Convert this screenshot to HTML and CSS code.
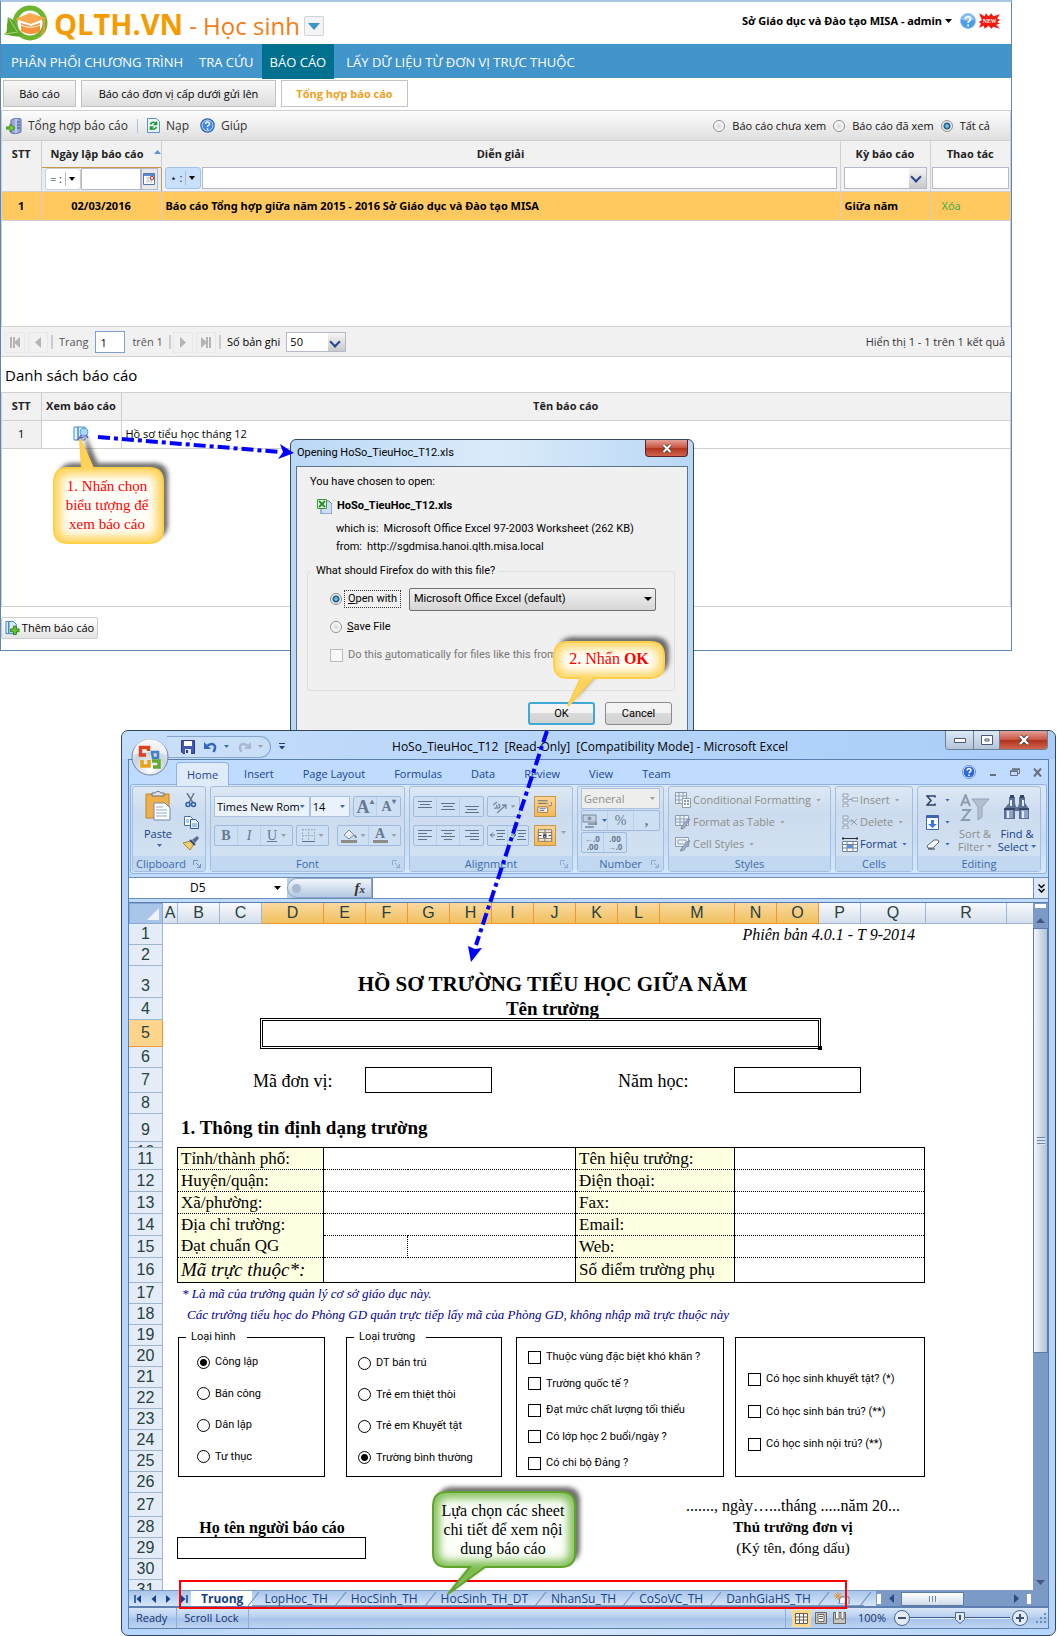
FILE: index.html
```html
<!DOCTYPE html>
<html lang="vi">
<head>
<meta charset="utf-8">
<meta name="viewport" content="width=device-width, initial-scale=1">
<title>QLTH.VN - Học sinh</title>
<link rel="stylesheet" href="styles.css">
</head>
<body>
<main class="desktop">

<section class="app">
  <header class="app-head">
    <svg class="logo" viewBox="0 0 46 38" width="46" height="38"><circle cx="27" cy="19" r="15" fill="#fff" stroke="#6db52d" stroke-width="5"/><path d="M1 30c3-1 3-4 3-9 1-4 0-6 1-8 4 2 7 4 8 8 2 4 3 8 6 11-5 1-11 0-18-2z" fill="#5aa52a"/><path d="M5 13l9 14M1 30l14-2" stroke="#a8d878" fill="none"/><path d="M12 15l15-6 16 5-15 6z" fill="#f9a94e"/><path d="M18 19l10 3 9-3v8c-5 4-13 4-19 0z" fill="#f7923a"/><path d="M18 21c6 3 13 3 19 0" stroke="#fff" fill="none"/><path d="M41 15v11l-3 5" stroke="#f7923a" stroke-width="2" fill="none"/></svg>
    <strong class="brand">QLTH.VN</strong>
    <span class="module">- Học sinh</span>
    <button class="module-menu" aria-label="Chọn phân hệ"><svg viewBox="0 0 12 7" width="12" height="7"><path d="M0 0h12L6 7z" fill="#3c93c8"/></svg></button>
    <div class="account"><a href="#">Sở Giáo dục và Đào tạo MISA - admin</a><svg viewBox="0 0 7 4" width="7" height="4"><path d="M0 0h7L3.500 4z"/></svg>
      <svg class="acc-help" viewBox="0 0 16 16" width="16" height="16"><circle cx="8" cy="8" r="7.500" fill="#4b9be8" stroke="#9cc4ee"/><path d="M2 7a6 6 0 0 1 12 0c-4 1-8 1-12 0z" fill="#8cc3f7"/><path d="M5.500 6.200c0-3.400 5.200-3.200 5 0-.2 1.800-2.400 1.700-2.400 3.700M8.100 11.500v1.700" stroke="#fff" stroke-width="1.800" fill="none"/></svg>
      <svg viewBox="0 0 22 16" width="21" height="16"><path d="M0 0l6 3 1-3 3 3 3-3 2 3 7-2-3 4 3 2-3 2 3 2-4 1 4 4-7-2-2 2-3-3-4 3-1-3-5 2 2-4-2-2 3-2z" fill="#f21a10"/><text x="4" y="10" class="new-txt">NEW</text></svg>
    </div>
  </header>
  <nav class="nav"><a href="#">PHÂN PHỐI CHƯƠNG TRÌNH</a><a href="#">TRA CỨU</a><a href="#" class="on">BÁO CÁO</a><a href="#">LẤY DỮ LIỆU TỪ ĐƠN VỊ TRỰC THUỘC</a></nav>
  <div class="subtabs"><button class="st-a">Báo cáo</button><button class="st-b">Báo cáo đơn vị cấp dưới gửi lên</button><button class="st-c on">Tổng hợp báo cáo</button></div>
  <div class="toolbar">
    <button><svg viewBox="0 0 16 16" width="16" height="16"><path d="M5 2l5-2 5 1v13l-5 2-5-1z" fill="#9aa8d8" stroke="#6470a8"/><path d="M10 1v14" stroke="#dfe5fa"/><path d="M11 4h3M11 7h3M11 10h3" stroke="#3e4f92"/><path d="M0 9h4V6l5 4-5 4v-3H0z" fill="#7ad03c" stroke="#3a8420"/></svg>Tổng hợp báo cáo</button>
    <i class="bar-sep"></i>
    <button><svg viewBox="0 0 13 15" width="13" height="15"><path d="M.5.500h9l3 3v11H.500z" fill="#eaf3fd" stroke="#5b8fd0"/><path d="M3.500 6.500c1-3 5-3 6 0M9.500 3.500v3h-3M9.500 9c-1 3-5 3-6 0M3.500 12V9h3" stroke="#1d9a2c" stroke-width="1.600" fill="none"/></svg>Nạp</button>
    <button><svg viewBox="0 0 16 16" width="15" height="15"><circle cx="8" cy="8" r="7" fill="#3f86dc" stroke="#2a66b8" stroke-width="1.500"/><circle cx="8" cy="8" r="5.800" fill="none" stroke="#cfe3fa"/><path d="M5.800 6.400c0-3 4.600-2.800 4.400 0-.2 1.600-2.200 1.500-2.200 3.200M8 11v1.500" stroke="#fff" stroke-width="1.600" fill="none"/></svg>Giúp</button>
    <div class="bar-radios">
      <label><input type="radio" name="seen">Báo cáo chưa xem</label>
      <label><input type="radio" name="seen">Báo cáo đã xem</label>
      <label><input type="radio" name="seen" checked>Tất cả</label>
    </div>
  </div>
  <div class="list-wrap">
    <table class="list">
      <colgroup><col class="c-no"><col class="c-date"><col><col class="c-term"><col class="c-act"></colgroup>
      <thead>
        <tr class="names"><th>STT</th><th class="sorted">Ngày lập báo cáo<svg viewBox="0 0 7 4" width="7" height="4"><path d="M0 4h7L3.500 0z" fill="#5b93cf"/></svg></th><th>Diễn giải</th><th>Kỳ báo cáo</th><th>Thao tác</th></tr>
        <tr class="filters"><th></th>
          <th class="hot"><div class="filter"><button class="op">= :<i></i><svg viewBox="0 0 6 4" width="6" height="4"><path d="M0 0h6L3 4z"/></svg></button><input aria-label="Lọc ngày lập"><button class="cal" aria-label="Chọn ngày"><svg viewBox="0 0 12 12" width="12" height="12"><path d="M.5.500h11v11H.500z" fill="#fff" stroke="#5577a8"/><path d="M1 2h10" stroke="#5b8bd0" stroke-width="2"/><path d="M3 5h6M3 8h6M5 4v6M8 4v6" stroke="#bcc"/><circle cx="9" cy="5" r="1.800" fill="#fff" stroke="#c22"/></svg></button></div></th>
          <th><div class="filter"><button class="op blue">⋆ :<i></i><svg viewBox="0 0 6 4" width="6" height="4"><path d="M0 0h6L3 4z"/></svg></button><input aria-label="Lọc diễn giải"></div></th>
          <th><div class="filter"><span class="combo"><select aria-label="Lọc kỳ báo cáo"><option></option></select></span></div></th>
          <th><div class="filter last"><input aria-label="Lọc thao tác"></div></th></tr>
      </thead>
      <tbody><tr><td class="mid">1</td><td class="mid">02/03/2016</td><td>Báo cáo Tổng hợp giữa năm 2015 - 2016 Sở Giáo dục và Đào tạo MISA</td><td>Giữa năm</td><td class="act"><a href="#">Xóa</a></td></tr></tbody>
    </table>
  </div>
  <div class="pager">
    <button aria-label="Trang đầu"><svg viewBox="0 0 10 11" width="10" height="11"><path d="M1 0v11M4 0v11" stroke="#b4b4b4" stroke-width="2"/><path d="M10 0v11L4 5.500z" fill="#b4b4b4"/></svg></button>
    <button aria-label="Trang trước"><svg viewBox="0 0 6 11" width="6" height="11"><path d="M6 0v11L0 5.500z" fill="#b4b4b4"/></svg></button>
    <i></i><label for="pg">Trang</label><input id="pg" value="1"><span>trên 1</span><i></i>
    <button aria-label="Trang sau"><svg viewBox="0 0 6 11" width="6" height="11"><path d="M0 0v11l6-5.500z" fill="#b4b4b4"/></svg></button>
    <button aria-label="Trang cuối"><svg viewBox="0 0 10 11" width="10" height="11"><path d="M9 0v11M6 0v11" stroke="#b4b4b4" stroke-width="2"/><path d="M0 0v11l6-5.500z" fill="#b4b4b4"/></svg></button>
    <i></i><label for="sz" class="dark">Số bản ghi</label><span class="combo size"><select id="sz"><option>50</option></select></span>
    <span class="total">Hiển thị 1 - 1 trên 1 kết quả</span>
  </div>
  <h2 class="list-title">Danh sách báo cáo</h2>
  <div class="sub-wrap">
    <table class="list sub">
      <colgroup><col class="c-no"><col class="c-view"><col></colgroup>
      <thead><tr><th>STT</th><th>Xem báo cáo</th><th>Tên báo cáo</th></tr></thead>
      <tbody><tr><td class="mid no">1</td><td class="mid"><svg viewBox="0 0 16 16" width="16" height="16"><path d="M1 1h4v13H1zM5 1h7v13H5z" fill="#e6f3fc" stroke="#3d8fd0"/><circle cx="11" cy="6" r="4" fill="#a8d8f5" stroke="#5aa3d8"/><path d="M8.500 9l-3 4 5-2M13 9l2 3" stroke="#6a5fb8" stroke-width="1.500" fill="none"/></svg></td><td>Hồ sơ tiểu học tháng 12</td></tr></tbody>
    </table>
  </div>
  <div class="app-foot"><button class="add"><svg viewBox="0 0 16 16" width="15" height="16"><path d="M1 1h3v13H1zM4 1h5l3 3v10H4z" fill="#d6ebfa" stroke="#3580bd"/><path d="M9 6h3v3h3v3h-3v3H9v-3H6V9h3z" fill="#6cc62f" stroke="#2f7d1a"/></svg>Thêm báo cáo</button></div>
</section>

<section class="dialog" role="dialog" aria-labelledby="dlg-t">
  <div class="dlg-title"><span id="dlg-t">Opening HoSo_TieuHoc_T12.xls</span><button class="win-close" aria-label="Close"><svg viewBox="0 0 10 9" width="10" height="9"><path d="M1.500 1l7 7M8.500 1l-7 7" stroke="#4a3a3a" stroke-width="3.500"/><path d="M1.500 1l7 7M8.500 1l-7 7" stroke="#fff" stroke-width="2"/></svg></button></div>
  <div class="dlg-body">
    <p>You have chosen to open:</p>
    <div class="file">
      <svg viewBox="0 0 15 15" width="15" height="15"><path d="M4 2h8l3 3v10H4z" fill="#cfdcf5" stroke="#5f7fbf"/><path d="M.5.500h9v9h-9z" fill="#e9f7e4" stroke="#3c9a3c"/><path d="M2 2l6 6M8 2L2 8" stroke="#258a2b" stroke-width="1.800"/></svg>
      <strong>HoSo_TieuHoc_T12.xls</strong>
    </div>
    <p class="ind"><span>which is:</span><span>Microsoft Office Excel 97-2003 Worksheet (262 KB)</span></p>
    <p class="ind"><span>from:</span><span>http://sgdmisa.hanoi.qlth.misa.local</span></p>
    <fieldset class="what"><legend>What should Firefox do with this file?</legend>
      <div class="choice open"><input type="radio" name="act" id="a-open" checked><label for="a-open" class="focus"><u>O</u>pen with</label><select class="prog" aria-label="Open with"><option>Microsoft Office Excel (default)</option></select></div>
      <div class="choice"><input type="radio" name="act" id="a-save"><label for="a-save"><u>S</u>ave File</label></div>
      <div class="choice off"><input type="checkbox" id="a-auto" disabled><label for="a-auto">Do this <u>a</u>utomatically for files like this from</label></div>
    </fieldset>
    <div class="dlg-btns"><button class="default">OK</button><button>Cancel</button></div>
  </div>
</section>

<section class="excel">
  <div class="x-title">
    <button class="orb" aria-label="Office Button"><svg viewBox="0 0 38 38" width="38" height="38"><defs><radialGradient id="orb" cx=".5" cy=".85" r=".9"><stop offset="0" stop-color="#fff"/><stop offset=".5" stop-color="#cdd4de"/><stop offset="1" stop-color="#f4f6f9"/></radialGradient></defs><circle cx="19" cy="19" r="18" fill="url(#orb)" stroke="#6d85a8"/><path d="M2 17a17 17 0 0 1 34 0c-10-4-24-4-34 0z" fill="#fff" opacity=".5"/><g fill="none" stroke-width="3.500"><path d="M15 17H9.500V9.500h8V13" stroke="#d9431e"/><path d="M21 14h6v6h-5z" stroke="#3f83c4" stroke-width="2.500"/><path d="M11 22v6h7v-6" stroke="#e8a317"/><path d="M21 23h7v6h-6" stroke="#63ac34"/></g></svg></button>
    <div class="qat">
      <svg viewBox="0 0 14 14" width="14" height="14"><path d="M.5.500h13v13H2l-1.500-1.500z" fill="#4457b5" stroke="#2b3788"/><path d="M3 1h8v5H3z" fill="#fff"/><path d="M4 9h6v5H4z" fill="#dfe4f5"/><path d="M5 10h2v3H5z" fill="#2b3788"/></svg>
      <svg class="g9" viewBox="0 0 13 12" width="13" height="12"><path d="M3.500 4.500C9 1 13.500 4 9.500 11" stroke="#3465c0" stroke-width="2.500" fill="none"/><path d="M0 1v7h7z" fill="#3465c0"/></svg><i class="car"></i>
      <svg class="g9" viewBox="0 0 13 12" width="13" height="12"><path d="M9.500 4.500C4 1-.5 4 3.500 11" stroke="#a9b7cc" stroke-width="2.500" fill="none"/><path d="M13 1v7H6z" fill="#a9b7cc"/></svg><i class="car dim"></i>
    </div>
    <svg class="qat-more" viewBox="0 0 6 7" width="6" height="7"><path d="M0 .5h6" stroke="#1e3f8a"/><path d="M0 3h6L3 6.500z" fill="#1e3f8a"/></svg>
    <span class="x-name">HoSo_TieuHoc_T12&nbsp; [Read-Only]&nbsp; [Compatibility Mode] - Microsoft Excel</span>
    <div class="x-ctl">
      <button aria-label="Minimize"><svg viewBox="0 0 12 5" width="12" height="5"><path d="M.5.500h11v4H.500z" fill="#fff" stroke="#4c5a6c"/></svg></button>
      <button aria-label="Restore"><svg viewBox="0 0 12 10" width="12" height="10"><path d="M.5.500h11v9H.500zM4 4h4v2H4z" fill="#fff" stroke="#4c5a6c"/></svg></button>
      <button class="red" aria-label="Close"><svg viewBox="0 0 12 10" width="12" height="10"><path d="M2 1l8 8M10 1L2 9" stroke="#4a3a3a" stroke-width="4"/><path d="M2 1l8 8M10 1L2 9" stroke="#fff" stroke-width="2.400"/></svg></button>
    </div>
  </div>
  <div class="x-frame">
    <nav class="x-tabs"><a href="#" class="on">Home</a><a href="#">Insert</a><a href="#">Page Layout</a><a href="#">Formulas</a><a href="#">Data</a><a href="#">Review</a><a href="#">View</a><a href="#">Team</a>
      <span class="x-doc"><svg viewBox="0 0 14 14" width="14" height="14"><circle cx="7" cy="7" r="6" fill="#2c68d8" stroke="#fff"/><circle cx="7" cy="7" r="6.500" fill="none" stroke="#6c8fc6"/><path d="M5 5.500c0-2.600 4.200-2.400 4 0-.2 1.400-2 1.400-2 2.800M7 9.600V11" stroke="#fff" stroke-width="1.500" fill="none"/></svg>
      <svg viewBox="0 0 8 10" width="8" height="10"><path d="M1 8h6" stroke="#66707c" stroke-width="2"/></svg>
      <svg viewBox="0 0 10 9" width="10" height="9"><path d="M.5 3.500h7v4h-7zM2.500 1.500h7v4H8" fill="none" stroke="#66707c"/><path d="M2 1h8M0 3h8" stroke="#66707c" stroke-width="1.500"/></svg>
      <svg viewBox="0 0 9 9" width="9" height="9"><path d="M1 .5l7 8M8 .5l-7 8" stroke="#66707c" stroke-width="2"/></svg></span>
    </nav>
    <div class="ribbon">
      <div class="grp g-clip"><div class="gb">
        <button class="big paste"><svg viewBox="0 0 26 30" width="26" height="30"><path d="M1 3h23v24H1z" fill="#efb04c" stroke="#c08328"/><path d="M7 5V2h3c1-2 5-2 6 0h3v3z" fill="#dfe3e8" stroke="#66707c"/><path d="M9 12h11l5 5v12H9z" fill="#fff" stroke="#6b88b5"/><path d="M11 16h7M11 19h11M11 22h11M11 25h11" stroke="#8fa9d0"/></svg><span>Paste</span><i class="car"></i></button>
        <div class="stack"><svg viewBox="0 0 12 15" width="12" height="15"><path d="M2 0l6 10M9 0L4 10" stroke="#68788e" stroke-width="1.500"/><circle cx="3" cy="11.500" r="2" fill="none" stroke="#2d59a8" stroke-width="1.500"/><circle cx="8.500" cy="11.500" r="2" fill="none" stroke="#2d59a8" stroke-width="1.500"/></svg>
        <svg viewBox="0 0 15 13" width="15" height="13"><path d="M.5.500h6l2 2v7h-8z" fill="#fff" stroke="#4470b4"/><path d="M6.500 3.500h5l3 3v6h-8z" fill="#e7f0fc" stroke="#2f5ca6"/><path d="M2 4h3M2 6h3M8 8h5M8 10h5" stroke="#6a92cf"/></svg>
        <svg viewBox="0 0 16 14" width="16" height="14"><path d="M9 4l5-4 2 2-4 5z" fill="#5b6b8a"/><path d="M0 7l8-2 3 3-4 6z" fill="#f0cf6a" stroke="#a88427"/><path d="M7 4l5 5" stroke="#37457a" stroke-width="2"/></svg></div>
      </div><div class="gl">Clipboard<svg class="lnch" viewBox="0 0 8 8" width="8" height="8"><path d="M.5 5V.500H5M3 3l4 4M7.500 4v3.500H4" stroke="#6f90bd" fill="none"/></svg></div></div>

      <div class="grp g-font"><div class="gb rows2">
        <div class="r"><span class="cb fam">Times New Rom<i class="car"></i></span><span class="cb pt">14<i class="car"></i></span><span class="bx push"><button class="sz-a">A<sup>▴</sup></button><button class="sz-b">A<sup>▾</sup></button></span></div>
        <div class="r"><span class="bx"><button><b>B</b></button><button><em>I</em></button><button class="w"><u>U</u><i class="car dim"></i></button></span><span class="bx"><button class="w"><svg viewBox="0 0 13 13" width="13" height="13"><path d="M.5 0v12M6.500 0v12M12.500 0v12M0 .5h13M0 6.500h13" stroke="#9fb0c6" stroke-dasharray="2 1"/><path d="M0 12.500h13" stroke="#5d6f88"/></svg><i class="car dim"></i></button></span><span class="bx push"><button class="w"><svg viewBox="0 0 16 14" width="16" height="14"><path d="M3 6l5-5 5 5-5 4z" fill="#e8eef6" stroke="#77879d"/><path d="M14 6l1 3" stroke="#77879d" stroke-width="2"/><path d="M0 12.500h16" stroke="#8f8c88" stroke-width="3"/></svg><i class="car dim"></i></button><button class="w"><span class="fc">A</span><i class="car dim"></i></button></span></div>
      </div><div class="gl">Font<svg class="lnch" viewBox="0 0 8 8" width="8" height="8"><path d="M.5 5V.500H5M3 3l4 4M7.500 4v3.500H4" stroke="#8fa9cc" fill="none"/></svg></div></div>

      <div class="grp g-align"><div class="gb rows2">
        <div class="r"><span class="bx"><button><svg viewBox="0 0 14 13" width="14" height="13"><path d="M0 1.500h14M2 4.500h10M0 7.500h14" stroke="#5e728f"/></svg></button><button><svg viewBox="0 0 14 13" width="14" height="13"><path d="M0 3.500h14M2 6.500h10M0 9.500h14" stroke="#5e728f"/></svg></button><button><svg viewBox="0 0 14 13" width="14" height="13"><path d="M0 6.500h14M2 9.500h10M0 12.500h14" stroke="#5e728f"/></svg></button></span><span class="bx"><button class="w"><svg viewBox="0 0 15 14" width="15" height="14"><path d="M1 5l4-3M2 8c3 1 4-2 2-3M6 4c3 1 2 5-1 4M5 13l9-8M14 9V5h-4" stroke="#77879d" stroke-width="1.300" fill="none"/></svg><i class="car dim"></i></button></span><button class="hot push"><svg viewBox="0 0 18 16" width="16" height="15"><path d="M1 1.500h11M1 4.500h11" stroke="#55657d"/><path d="M13 7h3V3M1 8.500h11v6H1z" fill="#fff" stroke="#8b6d3c"/><path d="M3 10.500h7M3 12.500h5" stroke="#55657d"/></svg></button><i class="sp"></i></div>
        <div class="r"><span class="bx"><button><svg viewBox="0 0 14 13" width="14" height="13"><path d="M0 1.500h14M0 4.500h9M0 7.500h14M0 10.500h9" stroke="#5e728f"/></svg></button><button><svg viewBox="0 0 14 13" width="14" height="13"><path d="M0 1.500h14M3 4.500h8M0 7.500h14M3 10.500h8" stroke="#5e728f"/></svg></button><button><svg viewBox="0 0 14 13" width="14" height="13"><path d="M0 1.500h14M5 4.500h9M0 7.500h14M5 10.500h9" stroke="#5e728f"/></svg></button></span><span class="bx"><button class="n"><svg viewBox="0 0 15 13" width="15" height="13"><path d="M6 1.500h9M7 4.500h8M7 7.500h6M6 10.500h9M5 6H0M3 3.500L.5 6 3 8.500" stroke="#5e728f" fill="none"/></svg></button><button class="n"><svg viewBox="0 0 15 13" width="15" height="13"><path d="M6 1.500h9M7 4.500h8M7 7.500h6M6 10.500h9M0 6h5M2.500 3.500L5 6 2.500 8.500" stroke="#5e728f" fill="none"/></svg></button></span><button class="hot push"><svg viewBox="0 0 18 16" width="16" height="15"><path d="M1.500 1.500h15v13h-15zM1 4.500h16M1 11.500h16M9 1v3M9 12v3" stroke="#7d6e56" fill="#f8f5ee"/><path d="M2 8h3M13 8h3M7 6.500h3v3.500H7.500V8H10" stroke="#3c4654" stroke-width="1.300" fill="none"/></svg></button><i class="sp"><i class="car dim"></i></i></div>
      </div><div class="gl">Alignment<svg class="lnch" viewBox="0 0 8 8" width="8" height="8"><path d="M.5 5V.500H5M3 3l4 4M7.500 4v3.500H4" stroke="#8fa9cc" fill="none"/></svg></div></div>

      <div class="grp g-num"><div class="gb rows3">
        <span class="cb gen">General<i class="car dim"></i></span>
        <span class="bx full"><button class="w"><svg viewBox="0 0 16 14" width="16" height="14"><path d="M1 1h13v7H1z" fill="#c4d0e0" stroke="#77879d"/><circle cx="7.500" cy="4.500" r="2" fill="#8796aa"/><path d="M6 10h9M3 13h9M14 8v3" stroke="#77879d" stroke-width="1.500"/></svg><i class="car"></i></button><button>%</button><button><b>,</b></button></span>
        <span class="bx dec"><button>←.0<br>.00</button><button>.00<br>→.0</button></span>
      </div><div class="gl">Number<svg class="lnch" viewBox="0 0 8 8" width="8" height="8"><path d="M.5 5V.500H5M3 3l4 4M7.500 4v3.500H4" stroke="#8fa9cc" fill="none"/></svg></div></div>

      <div class="grp g-style"><div class="gb lines dimt">
        <button><svg viewBox="0 0 16 16" width="16" height="16"><path d="M.5.500h11v11H.500zM0 4h12M0 8h12M4 0v12M8 0v12" fill="#eef3f9" stroke="#8c9db3"/><path d="M7.500 6.500h8v9h-8z" fill="#fff" stroke="#8c9db3"/><path d="M9 9h2M12 9h2M9 12h2M12 12h2" stroke="#66778e" stroke-width="1.500"/></svg>Conditional Formatting<i class="car dim"></i></button>
        <button><svg viewBox="0 0 16 16" width="16" height="16"><path d="M.5 1.500h13v10H.500zM0 5h14M0 8h14M5 1v11M9 1v11" fill="#eef3f9" stroke="#8c9db3"/><path d="M15 5l-6 9-3 1 1-3 6-7z" fill="#a9b5c6" stroke="#7a8ba2"/></svg>Format as Table<i class="car dim"></i></button>
        <button><svg viewBox="0 0 16 16" width="16" height="16"><path d="M.5 1.500h13v9H.500zM3 4h8v4H3z" fill="#eef3f9" stroke="#8c9db3"/><path d="M15 5l-6 9-4 1 2-3 6-7z" fill="#a9b5c6" stroke="#7a8ba2"/></svg>Cell Styles<i class="car dim"></i></button>
      </div><div class="gl">Styles</div></div>

      <div class="grp g-cells"><div class="gb lines dimt">
        <button><svg viewBox="0 0 16 14" width="16" height="14"><path d="M1 1h5v3H1zM1 6h5v3H1zM1 11h5v3H1zM10 5h6v3h-6zM7 6.500h3" fill="#eef3f9" stroke="#8c9db3"/></svg>Insert<i class="car dim"></i></button>
        <button><svg viewBox="0 0 16 14" width="16" height="14"><path d="M1 1h5v3H1zM1 6h5v3H1zM1 11h5v3H1zM7 6h4M9 4l6 6M15 4L9 10" fill="#eef3f9" stroke="#8c9db3"/></svg>Delete<i class="car dim"></i></button>
        <button class="live"><svg viewBox="0 0 16 15" width="16" height="15"><path d="M0 1.500h16M1 0v3M15 0v3" stroke="#333"/><path d="M.5 4.500h15v10H.500zM0 7.500h16M0 11h16M5 4v11M11 4v11" fill="#fff" stroke="#6f8299"/><path d="M5 8h6v3H5z" fill="#5a8fe0"/></svg>Format<i class="car"></i></button>
      </div><div class="gl">Cells</div></div>

      <div class="grp g-edit"><div class="gb edit">
        <div class="stack3"><button><svg viewBox="0 0 10 11" width="10" height="11"><path d="M9 2.500V1H1l4 4.500L1 10h8V8.500" stroke="#2b3f66" stroke-width="1.500" fill="none"/></svg><i class="car"></i></button><button><svg viewBox="0 0 13 15" width="13" height="15"><path d="M.5.500h12v14H.500z" fill="#fff" stroke="#3b66b0"/><path d="M1 2h11" stroke="#3b66b0" stroke-width="2"/><path d="M5 5h3v4h3l-4.500 4L2 9h3z" fill="#3b78d8"/></svg><i class="car"></i></button><button><svg viewBox="0 0 14 11" width="14" height="11"><path d="M1 7l7-6h4l1 2-6 6H2z" fill="#fff" stroke="#55657d"/><path d="M2 10h7" stroke="#333"/></svg><i class="car"></i></button></div>
        <button class="big dimt"><svg viewBox="0 0 30 28" width="30" height="28"><path d="M1 12L5.500 1 10 12M2.500 8.500h6M2 16h8L2 26h8" stroke="#8c9bb0" stroke-width="2" fill="none"/><path d="M12 5h17l-7 8v10l-4 3V13z" fill="#b3bfd0" stroke="#93a2b7"/></svg><span>Sort &amp;</span><span>Filter<i class="car dim"></i></span></button>
        <button class="big"><svg viewBox="0 0 28 26" width="28" height="26"><path d="M6 2h6v6l1 4h2l1-4V2h6v6l4 6v10H16v-8h-4v8H1V14l5-6z" fill="#5c7093"/><path d="M7 0h4v3H7zM17 0h4v3h-4z" fill="#34466c"/><path d="M3 15h7v8H3zM18 15h7v8h-7z" fill="#8ea3c6"/><path d="M8 5v6M20 5v6M5 16v7M20 16v7" stroke="#e3ebf8" stroke-width="2"/><path d="M1 14h11M16 14h10" stroke="#27375c" stroke-width="1.500"/></svg><span>Find &amp;</span><span>Select<i class="car"></i></span></button>
      </div><div class="gl">Editing</div></div>
    </div>
    <div class="fbar"><div class="namebox"><span>D5</span><svg viewBox="0 0 7 4" width="7" height="4"><path d="M0 0h7L3.500 4z"/></svg></div><div class="fx"><i></i><em>f<sub>x</sub></em></div><input aria-label="Formula bar"><button aria-label="Expand formula bar"><svg viewBox="0 0 7 9" width="7" height="9"><path d="M.5.500l3 3 3-3M.5 5l3 3 3-3" stroke="#000" stroke-width="1.500" fill="none"/></svg></button></div>

    <div class="work">
      <div class="sheet">
        <div class="corner"><svg viewBox="0 0 12 12" width="12" height="12"><path d="M12 0v12H0z" fill="#eef3fa"/></svg></div>
        <div class="cols"><span>A</span><span>B</span><span>C</span><span class="s">D</span><span class="s">E</span><span class="s">F</span><span class="s">G</span><span class="s">H</span><span class="s">I</span><span class="s">J</span><span class="s">K</span><span class="s">L</span><span class="s">M</span><span class="s">N</span><span class="s">O</span><span>P</span><span>Q</span><span>R</span><span></span></div>
        <div class="nums"><span>1</span><span>2</span><span class="lo">3</span><span>4</span><span class="s">5</span><span>6</span><span>7</span><span>8</span><span class="lo">9</span><span class="thin">10</span><span>11</span><span>12</span><span>13</span><span>14</span><span>15</span><span>16</span><span>17</span><span>18</span><span>19</span><span>20</span><span>21</span><span>22</span><span>23</span><span>24</span><span>25</span><span>26</span><span>27</span><span>28</span><span>29</span><span>30</span><span class="cut">31</span></div>
        <div class="cells">
          <div class="version">Phiên bản 4.0.1 - T 9-2014</div>
          <h1 class="doc-title">HỒ SƠ TRƯỜNG TIỂU HỌC GIỮA NĂM</h1>
          <label class="school-l" for="school">Tên trường</label>
          <div class="school"><input id="school"></div>
          <label class="code-l" for="code">Mã đơn vị:</label><input class="code" id="code">
          <label class="year-l" for="year">Năm học:</label><input class="year" id="year">
          <h2 class="part">1. Thông tin định dạng trường</h2>
          <table class="info">
            <colgroup><col class="i1"><col class="i2"><col class="i3"><col class="i4"><col></colgroup>
            <tr><th>Tỉnh/thành phố:</th><td colspan="2"></td><th>Tên hiệu trưởng:</th><td></td></tr>
            <tr><th>Huyện/quận:</th><td colspan="2"></td><th>Điện thoại:</th><td></td></tr>
            <tr><th>Xã/phường:</th><td colspan="2"></td><th>Fax:</th><td></td></tr>
            <tr><th class="nb">Địa chỉ trường:</th><td colspan="2"></td><th>Email:</th><td></td></tr>
            <tr><th>Đạt chuẩn QG</th><td class="half"></td><td class="rest"></td><th>Web:</th><td></td></tr>
            <tr><th class="it">Mã trực thuộc*:</th><td colspan="2"></td><th>Số điểm trường phụ</th><td></td></tr>
          </table>
          <p class="note n1">* Là mã của trường quản lý cơ sở giáo dục này.</p>
          <p class="note n2">Các trường tiểu học do Phòng GD quản trực tiếp lấy mã của Phòng GD, không nhập mã trực thuộc này</p>
          <div class="boxes">
            <fieldset class="b1"><legend>Loại hình</legend><label><input type="radio" name="lh" checked>Công lập</label><label><input type="radio" name="lh">Bán công</label><label><input type="radio" name="lh">Dân lập</label><label><input type="radio" name="lh">Tư thục</label></fieldset>
            <fieldset class="b2"><legend>Loại trường</legend><label><input type="radio" name="lt">DT bán trú</label><label><input type="radio" name="lt">Trẻ em thiệt thòi</label><label><input type="radio" name="lt">Trẻ em Khuyết tật</label><label><input type="radio" name="lt" checked>Trường bình thường</label></fieldset>
            <div class="b3"><label><input type="checkbox">Thuộc vùng đặc biệt khó khăn ?</label><label><input type="checkbox">Trường quốc tế ?</label><label><input type="checkbox">Đạt mức chất lượng tối thiểu</label><label><input type="checkbox">Có lớp học 2 buổi/ngày ?</label><label><input type="checkbox">Có chi bộ Đảng ?</label></div>
            <div class="b4"><label><input type="checkbox">Có học sinh khuyết tật? (*)</label><label><input type="checkbox">Có học sinh bán trú? (**)</label><label><input type="checkbox">Có học sinh nội trú? (**)</label></div>
          </div>
          <div class="date">......., ngày…...tháng .....năm 20...</div>
          <label class="rep-l" for="rep">Họ tên người báo cáo</label>
          <strong class="head">Thủ trưởng đơn vị</strong>
          <input class="rep" id="rep">
          <div class="sign">(Ký tên, đóng dấu)</div>
        </div>
      </div>
      <div class="vscroll"><i class="split"></i><svg class="vbtn" viewBox="0 0 9 5" width="9" height="5"><path d="M0 5h9L4.500 0z" fill="#44587e"/></svg><i class="thumb"></i><i class="track"></i><svg class="vbtn" viewBox="0 0 9 5" width="9" height="5"><path d="M0 0h9L4.500 5z" fill="#44587e"/></svg></div>
    </div>

    <div class="tabbar">
      <div class="tnav"><svg viewBox="0 0 54 8" width="54" height="8"><path d="M1 0v8M53 0v8" stroke="#153f94" stroke-width="1.500"/><path d="M7 0v8L2.500 4zM22 0v8l-4.500-4zM32 0v8l4.500-4zM47 0v8l4.500-4z" fill="#153f94"/></svg></div>
      <a href="#" class="on">Truong</a><a href="#">LopHoc_TH</a><a href="#">HocSinh_TH</a><a href="#">HocSinh_TH_DT</a><a href="#">NhanSu_TH</a><a href="#">CoSoVC_TH</a><a href="#">DanhGiaHS_TH</a><a href="#" class="new" aria-label="Insert Worksheet"><svg viewBox="0 0 16 12" width="16" height="12"><path d="M6 5h9v7H5z" fill="#fff" stroke="#5474a8"/><path d="M4 0v8M0 4h8M1 1l6 6M7 1L1 7" stroke="#e8922a"/></svg></a>
      <div class="hscroll"><i class="split"></i><svg viewBox="0 0 5 9" width="5" height="9"><path d="M5 0v9L0 4.500z" fill="#2e4a80"/></svg><i class="thumb"></i><i class="track"></i><svg viewBox="0 0 5 9" width="5" height="9"><path d="M0 0v9l5-4.500z" fill="#2e4a80"/></svg><i class="split"></i></div>
    </div>
    <div class="status"><span>Ready</span><span class="wide">Scroll Lock</span>
      <div class="views"><button class="on" aria-label="Normal"><svg viewBox="0 0 13 11" width="13" height="11"><path d="M.5.500h12v10H.500zM0 4h13M0 7h13M4.500 0v11M8.500 0v11" fill="#fff" stroke="#6b5d4c"/></svg></button><button aria-label="Page Layout"><svg viewBox="0 0 12 12" width="12" height="12"><path d="M.5.500h11v11H.500z" fill="#c9c6c2" stroke="#6a6763"/><path d="M3 2.500h6v7H3zM4 4.500h4M4 6.500h4" fill="#fff" stroke="#6a6763"/></svg></button><button aria-label="Page Break Preview"><svg viewBox="0 0 13 12" width="13" height="12"><path d="M.5.500h12v11H.500z" fill="#c9c6c2" stroke="#6a6763"/><path d="M2.500 0v7h3.500V0M8 0v7h3V0" fill="#fff" stroke="#6a6763"/></svg></button></div>
      <span class="pct">100%</span>
      <svg class="zoom" viewBox="0 0 136 18" width="136" height="18"><path d="M17 8.500h100" stroke="#3c5f94"/><path d="M17 9.500h100" stroke="#fff" opacity=".7"/><g fill="#e3ebf6" stroke="#49658f"><circle cx="9" cy="9" r="7.500"/><circle cx="127" cy="9" r="7.500"/><path d="M62.500 3.500h9v7l-4.500 4-4.500-4z"/></g><path d="M5 9h8M123 9h8M127 5v8M67 6v5" stroke="#3f5273" stroke-width="2"/></svg>
      <svg viewBox="0 0 10 10" width="10" height="10"><path d="M8 0h2v2H8zM8 4h2v2H8zM4 4h2v2H4zM8 8h2v2H8zM4 8h2v2H4zM0 8h2v2H0z" fill="#6d8ab8"/></svg>
    </div>
  </div>
</section>

<svg class="arrow ar1" viewBox="0 0 204 34" width="204" height="34"><path d="M6 10l182 15" stroke="#00f" stroke-width="4" stroke-dasharray="12 4 4 4" fill="none"/><path d="M202 26l-16 6 5-7-3-8z" fill="#00f"/></svg>
<svg class="arrow ar2" viewBox="0 0 94 240" width="94" height="240"><path d="M84 2L13 216" stroke="#00f" stroke-width="4" stroke-dasharray="12 4 4 4" fill="none"/><path d="M8 233L5 217l7 3 7-1z" fill="#00f"/></svg>
<i class="frame"></i>

<div class="callout k1"><svg viewBox="0 0 130 122" width="130" height="122"><defs><filter id="sh" x="-20%" y="-20%" width="150%" height="150%"><feDropShadow dx="5" dy="-5" stdDeviation="2" flood-color="#333" flood-opacity=".7"/></filter><filter id="bl" x="-20%" y="-20%" width="140%" height="140%"><feGaussianBlur stdDeviation="5"/></filter><clipPath id="c1"><path d="M31 4l13 29h56q14 0 14 14v47q0 14-14 14H19Q5 108 5 94V47q0-14 14-14h14z"/></clipPath></defs><path d="M31 4l13 29h56q14 0 14 14v47q0 14-14 14H19Q5 108 5 94V47q0-14 14-14h14z" fill="#fffef6" filter="url(#sh)"/><g clip-path="url(#c1)"><path d="M31 4l13 29h56q14 0 14 14v47q0 14-14 14H19Q5 108 5 94V47q0-14 14-14h14z" fill="none" stroke="#ffd257" stroke-width="13" filter="url(#bl)"/></g><path d="M31 4l13 29h56q14 0 14 14v47q0 14-14 14H19Q5 108 5 94V47q0-14 14-14h14z" fill="none" stroke="#ffcf4a" stroke-width="2"/></svg><p>1. Nhấn chọn biểu tượng để xem báo cáo</p></div>

<div class="callout k2"><svg viewBox="0 0 130 86" width="130" height="86"><defs><clipPath id="c2"><path d="M19 14h82q14 0 14 14v8q0 14-14 14H44L19 78l13-28H19Q5 50 5 36v-8q0-14 14-14z"/></clipPath></defs><path d="M19 14h82q14 0 14 14v8q0 14-14 14H44L19 78l13-28H19Q5 50 5 36v-8q0-14 14-14z" fill="#fffef6" filter="url(#sh)"/><g clip-path="url(#c2)"><path d="M19 14h82q14 0 14 14v8q0 14-14 14H44L19 78l13-28H19Q5 50 5 36v-8q0-14 14-14z" fill="none" stroke="#ffd257" stroke-width="11" filter="url(#bl)"/></g><path d="M19 14h82q14 0 14 14v8q0 14-14 14H44L19 78l13-28H19Q5 50 5 36v-8q0-14 14-14z" fill="none" stroke="#ffcf4a" stroke-width="2"/></svg><p>2. Nhấn <b>OK</b></p></div>

<div class="callout k3"><svg viewBox="0 0 162 120" width="162" height="120"><defs><clipPath id="c3"><path d="M19 10h114q14 0 14 14v47q0 14-14 14H57L20 112l22-27H19Q5 85 5 71V24q0-14 14-14z"/></clipPath></defs><path d="M19 10h114q14 0 14 14v47q0 14-14 14H57L20 112l22-27H19Q5 85 5 71V24q0-14 14-14z" fill="#fcfffa" filter="url(#sh)"/><g clip-path="url(#c3)"><path d="M19 10h114q14 0 14 14v47q0 14-14 14H57L20 112l22-27H19Q5 85 5 71V24q0-14 14-14z" fill="none" stroke="#79bb4c" stroke-width="12" filter="url(#bl)"/></g><path d="M19 10h114q14 0 14 14v47q0 14-14 14H57L20 112l22-27H19Q5 85 5 71V24q0-14 14-14z" fill="none" stroke="#5fa52c" stroke-width="2"/></svg><p>Lựa chọn các sheet chi tiết để xem nội dung báo cáo</p></div>
</main>
</body>
</html>
```

FILE: styles.css
```css
:root {
  --ui: "Open Sans", "Noto Sans", sans-serif;
  --ui-wide: "Noto Sans", "Open Sans", sans-serif;
  --ui-narrow: Roboto, "Open Sans", sans-serif;
  --serif: "Liberation Serif", "Times New Roman", serif;
  --grid-cols: 15px 42px 42px 62px repeat(8, 42px) 75px 42px 42px 42px 65px 81px minmax(0, 1fr);
  --grid-rows: 21px 21px 32px 22px 27px 21px 25px 21px 28px 6px 22px 22px 22px 22px 22px 25px repeat(10, 21px) 24px 21px 21px 21px 10px;
}
* { box-sizing: border-box; }
body { margin: 0; background: #fff; font: 12px/16px var(--ui); color: #000; }
button, input, select { font: inherit; color: inherit; margin: 0; padding: 0; }
button { background: none; border: 0; display: inline-flex; align-items: center; justify-content: center; white-space: nowrap; }
a { color: inherit; text-decoration: none; }
svg { display: block; flex: none; }
p, h1, h2 { margin: 0; font-weight: normal; }
input { border: 1px solid #b5b8c8; background: #fff; min-width: 0; border-radius: 0; }
select { appearance: none; border: 0; border-radius: 0; background: transparent; }
.desktop { position: relative; padding-bottom: 1px; }

/* ---- web application ---- */
.app { margin-right: 45px; border: 1px solid #5b87b7; border-top: 2px solid #a9c6e2; background: #fff; }
.app-head { display: flex; align-items: center; height: 42px; padding: 0 11px 0 2px; color: #f57c14; }
.brand { font-size: 29px; line-height: 40px; color: #f59b00; margin-left: 5px; padding-top: 2px; }
.module { font-size: 24px; line-height: 40px; margin: 6px 0 0 6px; }
.module-menu { width: 20px; height: 20px; margin: 6px 0 0 4px; border: 1px solid #d0d4d8; background: #f2f4f6; border-radius: 2px; }
.account { margin-left: auto; display: flex; align-items: center; gap: 3px; font: bold 11px/16px var(--ui-wide); color: #000; padding-bottom: 4px; }
.acc-help { margin-left: 5px; }
.new-txt { font: bold 6px var(--serif); fill: #fff; }
.nav { display: flex; height: 34px; background: #4295cb; color: #fff; font-size: 13px; line-height: 36px; white-space: nowrap; }
.nav a { padding: 0 8px; }
.nav a:first-child { padding-left: 10px; }
.nav .on { background: #00708f; height: 35px; }
.nav .on + a { padding-left: 12px; }
.subtabs { display: flex; gap: 5px; padding: 2px; height: 32px; }
.subtabs button { height: 27px; border: 1px solid #c3c3c3; background: linear-gradient(#f8f8f8, #dedede); font-size: 11px; }
.st-a { width: 73px; }
.st-b { width: 195px; }
.subtabs .st-c { width: 127px; background: #fff; color: #f2a01e; font-weight: bold; }
.toolbar { display: flex; align-items: center; height: 31px; border: 1px solid #cfcfcf; background: linear-gradient(#fdfdfd, #dfdfdf); padding-left: 4px; font-size: 12px; color: #333; }
.toolbar button { gap: 6px; margin-right: 9px; }
.toolbar button + button { margin-left: 2px; }
.bar-sep { width: 1px; height: 14px; background: #a8c6e4; margin-right: 9px; }
.bar-radios { margin-left: auto; display: flex; font-size: 11px; padding-right: 20px; gap: 7px; color: #111; }
.bar-radios label { display: flex; align-items: center; gap: 7px; }
input[type="radio"], input[type="checkbox"] { appearance: none; flex: none; width: 13px; height: 13px; border: 1px solid #000; background: #fff; }
input[type="radio"] { border-radius: 50%; }
.bar-radios input[type="radio"], .choice input[type="radio"] { width: 12px; height: 12px; border-color: #8b8f94; background: radial-gradient(#d5d5d5, #fff 70%); }
.bar-radios input[type="radio"]:checked, .choice input[type="radio"]:checked { background: radial-gradient(circle at 50% 50%, #6fc3ea 0 1px, #17527c 3px, #eee 4px); }
.list-wrap { height: 186px; border: 1px solid #d0d0d0; border-top: 0; }
.list { width: 100%; table-layout: fixed; border-collapse: collapse; font-size: 11px; }
.c-no { width: 39px; }
.c-date { width: 120px; }
.c-term { width: 90px; }
.c-act { width: 80px; }
.c-view { width: 80px; }
.list th { background: #f1f1f1; border-left: 1px solid #d0d0d0; padding: 0; color: #222; }
.list th:first-child { border-left: 0; }
.names th { height: 26px; }
.sorted svg { display: inline-block; margin: 0 -9px 0 10px; vertical-align: 4px; }
.filters th { height: 24px; border-bottom: 1px solid #d0d0d0; }
.filters .hot { background: #e3eefb; }
.filter { display: flex; height: 22px; padding: 0 3px; margin-bottom: 1px; font-weight: normal; }
.filter.last { padding: 0 1px; }
.filter input { flex: 1; }
.filter .op { width: 36px; border: 1px solid #ccc; border-radius: 3px; gap: 3px; background: #fff; }
.filter .op i { border-left: 1px solid #bbb; height: 14px; }
.filter .blue { background: #c9e0fa; border-color: #a5c3e8; margin-right: 1px; }
.filter .cal { width: 17px; background: #e8e8e8; border: 1px solid #b5b8c8; }
.combo { position: relative; display: flex; flex: 1; border: 1px solid #b5b8c8; background: #fff; }
.combo select { flex: 1; padding-left: 3px; background: linear-gradient(#f5f5f5, #c9c9c9) right / 17px 100% no-repeat; }
.combo::after { content: ""; position: absolute; right: 6px; top: 5px; width: 6px; height: 6px; border: solid #24468c; border-width: 0 2px 2px 0; transform: rotate(45deg); pointer-events: none; }
.list td { border: 0 solid #d0d0d0; border-width: 0 0 1px 1px; padding: 0 4px; }
.list td:first-child { border-left: 0; }
.list-wrap td { background: #ffc95f; font: bold 11px/16px var(--ui-wide); height: 29px; }
.list .mid { text-align: center; }
.list-wrap .act { color: #3fae49; font-weight: normal; padding-left: 11px; }
.mid svg { margin: auto; }
.pager { display: flex; align-items: center; height: 30px; background: #f1f1f1; border-bottom: 1px solid #d0d0d0; padding: 1px 6px 0 4px; font-size: 11px; color: #555; }
.pager button { width: 20px; height: 21px; margin-right: 3px; border: 1px solid #e8e8e8; }
.pager > i { width: 2px; height: 14px; background: #ccc; margin: 0 6px 0 0; }
.pager input { width: 30px; height: 22px; margin: 0 7px; padding-left: 4px; border-color: #7fa0cf; color: #000; }
.pager span + i { margin: 0 2px 0 6px; }
.pager .dark { color: #000; margin-right: 6px; }
.pager .size { flex: none; width: 60px; height: 20px; color: #000; }
.total { margin-left: auto; color: #333; }
.list-title { font-size: 15px; line-height: 34px; height: 35px; padding-left: 4px; padding-top: 1px; }
.sub-wrap { height: 215px; border: 1px solid #d0d0d0; }
.sub th { height: 27px; border-bottom: 1px solid #d0d0d0; }
.sub td { height: 28px; padding-left: 4px; }
.sub .no { background: #f1f1f1; padding: 0; }
.app-foot { height: 43px; padding-top: 10px; }
.add { height: 22px; width: 97px; gap: 2px; border: 1px solid #ccc; border-radius: 2px; background: linear-gradient(#fff, #e4e4e4); font-size: 11px; }

/* ---- download dialog ---- */
.dialog { position: absolute; left: 290px; top: 439px; width: 404px; height: 320px; border: 1px solid #36485e; border-radius: 6px 6px 0 0; background: linear-gradient(90deg, #b9d8f6, #dcebfa 50%, #b9d8f6); padding: 0 5px; font: 11px/16px var(--ui-narrow); }
.dlg-title { display: flex; height: 26px; padding-left: 1px; line-height: 25px; }
.win-close { margin-left: auto; width: 43px; height: 17px; border: 1px solid #5b2323; border-top: 0; border-radius: 0 0 4px 4px; background: linear-gradient(#e3a299, #c9513f 50%, #b0301c 50%, #d0644c); }
.dlg-body { border: 1px solid #5d7386; background: #f0f0f0; height: 290px; padding: 7px 13px; }
.file { display: flex; align-items: center; gap: 5px; padding: 8px 7px 7px; }
.ind { padding-left: 26px; display: flex; gap: 5px; height: 18px; }
.what { margin: 6px -1px 0 -3px; border: 1px solid #dcdfe6; border-radius: 3px; padding: 5px 18px 0 22px; height: 128px; }
.what legend { padding: 0 4px 0 6px; margin-left: -20px; }
.choice { display: flex; align-items: center; height: 26px; gap: 5px; }
.choice.open { position: relative; height: 30px; gap: 3px; }
.choice.off { height: 30px; color: #777; white-space: nowrap; }
.choice.off input { border-color: #bbb; background: #f8f8f8; }
.focus { outline: 1px dotted #333; padding: 0 3px; margin-right: 6px; }
.prog { flex: 1; height: 23px; border: 1px solid #707070; border-radius: 2px; padding-left: 4px; background: linear-gradient(#f2f2f2, #d5d5d5); }
.choice.open::after { content: ""; position: absolute; right: 4px; top: 13px; border: solid transparent; border-width: 4px 4px 0; border-top-color: #000; pointer-events: none; }
.dlg-btns { display: flex; justify-content: flex-end; gap: 10px; padding: 11px 2px; }
.dlg-btns button { width: 67px; height: 23px; border: 1px solid #8a8a8a; border-radius: 3px; background: linear-gradient(#f3f3f3 50%, #dadada 50%, #d2d2d2); }
.dlg-btns .default { border: 2px solid #3fa9d6; }

/* ---- spreadsheet window ---- */
.excel { position: relative; margin: 79px 1px 0 121px; border: 1px solid #31465e; border-radius: 7px; background: linear-gradient(90deg, #b5d5fa, #d8e8fb 40%, #b5d5fa); padding: 0 6px 6px; font-size: 11px; }
.x-title { display: flex; height: 28px; align-items: center; position: relative; background: linear-gradient(90deg, #c4ddfb, #a9cdf8); margin: 0 -6px; padding: 0 7px; border-radius: 7px 7px 0 0; }
.orb { position: absolute; left: 9px; top: 7px; z-index: 2; }
.qat { display: flex; align-items: center; margin: 3px 0 0 38px; width: 104px; height: 22px; border: 1px solid #87a5cb; border-left: 0; border-radius: 0 11px 11px 0; padding-left: 14px; background: #c9dff8; }
.qat .g9 { margin: 0 7px 0 9px; }
.car { display: inline-block; flex: none; width: 5px; height: 3px; background: #3d6cb5; clip-path: polygon(0 0, 100% 0, 50% 100%); vertical-align: 3px; }
.dim { background: #a0a09c; }
.qat-more { margin: 3px 0 0 8px; }
.x-name { flex: 1; text-align: center; font-size: 12px; white-space: nowrap; padding: 3px 50px 0 0; }
.x-ctl { display: flex; align-self: flex-start; height: 19px; border: 1px solid #6d7f95; border-top: 0; border-radius: 0 0 4px 4px; overflow: hidden; }
.x-ctl button { width: 28px; background: linear-gradient(#dce8f5, #b5c5d9); border-right: 1px solid #6d7f95; }
.x-ctl button + button { width: 26px; }
.x-ctl .red { width: 47px; border: 0; background: linear-gradient(#e3a299, #c9513f 50%, #b0301c 50%, #d0644c); }
.x-frame { border: 1px solid #5a7fae; background: #bfdbff; }
.x-tabs { display: flex; height: 24px; color: #1b4590; line-height: 28px; padding-left: 47px; }
.x-tabs a { padding: 0 14px 0 15px; white-space: nowrap; }
.x-tabs .on { background: #dfebf9; border: 1px solid #8db2e3; border-bottom: 0; border-radius: 4px 4px 0 0; margin: 2px 0 0; line-height: 24px; padding: 0 10px; height: 24px; z-index: 1; }
.x-doc { margin-left: auto; display: flex; align-items: center; gap: 13px; padding-right: 6px; height: 24px; }
.ribbon { display: flex; gap: 4px; height: 90px; border: 1px solid #8db2e3; background: linear-gradient(#dbe7f5, #c7daf0 60%, #d6e8fb); padding: 1px; border-radius: 3px; margin: 0 1px; }
.grp { display: flex; flex-direction: column; border: 1px solid #a3bfdf; border-radius: 3px; flex: none; height: 86px; background: linear-gradient(#dde8f4, #ccdcee 30%, #d3e2f3); }
.gb { flex: 1; display: flex; min-height: 0; }
.gl { height: 15px; line-height: 15px; background: #c1d8f0; color: #3e6aaa; text-align: center; position: relative; }
.lnch { position: absolute; right: 4px; top: 4px; }
.g-clip { width: 74px; }
.g-clip .gl { text-align: left; padding-left: 3px; }
.g-font { width: 195px; }
.g-align { width: 164px; }
.g-num { width: 87px; }
.g-style { width: 163px; }
.g-cells { width: 78px; }
.g-edit { width: 124px; }
.big { flex-direction: column; color: #15428b; line-height: 13px; justify-content: flex-start; }
.big .car { margin-left: 3px; }
.paste { width: 50px; padding-top: 4px; }
.paste span { margin: 6px 0 4px; }
.stack { display: flex; flex-direction: column; justify-content: space-between; align-items: center; padding: 6px 0; width: 16px; }
.rows2 { flex-direction: column; gap: 8px; padding: 9px 3px 8px; }
.r { display: flex; height: 21px; gap: 3px; }
.cb { display: flex; align-items: center; justify-content: space-between; background: #eaf2fb; border: 1px solid #abc1de; padding: 0 4px 0 2px; white-space: nowrap; }
.fam { width: 97px; margin-right: -3px; }
.pt { width: 43px; }
.bx { display: flex; border: 1px solid #9ebbdd; border-radius: 2px; background: #cddff3; }
.bx button { width: 23px; border-right: 1px solid #b9cee8; color: #66788f; font-family: var(--serif); font-size: 14px; }
.bx button:last-child { border-right: 0; }
.bx button.w { width: 31px; gap: 4px; }
.bx button.n { width: 20px; }
.push { margin-left: auto; }
.sz-a, .sz-b { font-weight: bold; }
.bx .sz-a { font-size: 18px; }
.bx sup { font-size: 8px; line-height: 8px; align-self: flex-start; margin-top: 1px; }
.fc { border-bottom: 3px solid #8f8c88; line-height: 12px; width: 15px; font-weight: bold; }
.hot { width: 22px; border: 1px solid #c9974a; background: linear-gradient(#fbd596, #f3b857); }
.sp { width: 10px; padding-left: 2px; }
.rows3 { flex-direction: column; gap: 1px; padding: 1px 3px; align-items: stretch; }
.rows3 > * { height: 21px; }
.gen { background: #eeeeec; color: #8f8f8a; }
.full button { flex: 1; }
.dec { align-self: flex-start; width: 46px; }
.bx.dec button { font: bold 8px/8px var(--ui); }
.lines { flex-direction: column; padding: 2px 6px 0; }
.lines button { height: 22px; gap: 2px; justify-content: flex-start; color: #15428b; }
.lines .car { margin-left: 3px; }
.dimt button, .dimt { color: #8d8d88; }
.lines .live { color: #15428b; }
.big.dimt { color: #8d8d88; }
.edit { padding: 2px 6px 0 8px; gap: 8px; }
.edit .big { width: 34px; padding-top: 5px; gap: 0; }
.edit .big svg { height: 28px; margin-bottom: 5px; }
.stack3 { display: flex; flex-direction: column; width: 24px; }
.stack3 button { height: 22px; justify-content: space-between; }
.fbar { display: flex; height: 22px; margin: 3px 0; border: solid #6f8fb8; border-width: 1px 0; background: #b9cfe9; }
.namebox { width: 158px; background: #fff; display: flex; align-items: center; font-size: 12px; padding-left: 61px; justify-content: space-between; padding-right: 6px; }
.fx { width: 85px; border: 1px solid #8aa7cb; border-radius: 11px 0 0 11px; display: flex; align-items: center; justify-content: space-between; padding: 0 6px 0 4px; background: linear-gradient(#f2f6fb, #b4c8e2); font: bold 15px var(--serif); color: #333; }
.fx i { width: 9px; height: 9px; border-radius: 50%; background: #a8b9d2; }
.fx sub { font-size: 11px; vertical-align: baseline; }
.fbar input { flex: 1; border: 0; border-left: 1px solid #6f8fb8; }
.fbar button { width: 15px; background: #dce8f6; border-left: 1px solid #6f8fb8; }

.work { display: flex; border-top: 1px solid #5a7fae; }
.sheet { flex: 1; min-width: 0; display: grid; grid-template: 21px auto / 34px minmax(0, 1fr); background: #fff; }
.corner { background: #a9c4e9; border: 1px solid #8aa8d2; display: flex; align-items: flex-end; justify-content: flex-end; padding: 3px; }
.cols { display: grid; grid-template-columns: var(--grid-cols); font: 16px/20px "Liberation Sans", Arial, sans-serif; color: #27413e; }
.cols span { border: solid #9eb6ce; border-width: 0 1px 1px 0; text-align: center; background: linear-gradient(#f7f9fc, #d5dfec); }
.cols .s { background: linear-gradient(#f9d99f, #f1c15f); border-color: #f29536; }
.cols span:last-child { border-right: 0; }
.nums { display: grid; grid-template-rows: var(--grid-rows); font: 16px/20px "Liberation Sans", Arial, sans-serif; color: #27413e; }
.nums span { border: solid #9eb6ce; border-width: 0 1px 1px 0; background: #e4ecf7; display: flex; align-items: center; justify-content: center; overflow: hidden; min-height: 0; }
.nums .lo { align-items: flex-end; line-height: 22px; }
.nums .s { background: #ffd58d; border-color: #f29536; }
.nums .cut { align-items: flex-start; border-bottom: 0; }
.nums .thin { align-items: flex-start; }
.cells { display: grid; grid-template: var(--grid-rows) / var(--grid-cols); font-family: var(--serif); white-space: nowrap; }
.cells > * { min-width: 0; min-height: 0; }
.version { grid-area: 1 / 13 / 2 / 18; font: italic 16px/21px var(--serif); text-align: right; padding-right: 11px; }
.doc-title { grid-area: 3 / 4 / 4 / 16; font: bold 21px/28px var(--serif); text-align: center; align-self: end; padding-left: 24px; }
.school-l { grid-area: 4 / 4 / 5 / 16; font: bold 19px/22px var(--serif); text-align: center; padding-left: 24px; }
.school { grid-area: 5 / 4 / 6 / 16; border: 1px solid #000; outline: 1px solid #000; outline-offset: 1px; position: relative; display: flex; background: #fff; }
.school input { border: 0; flex: 1; }
.school::after { content: ""; position: absolute; right: -4px; bottom: -4px; width: 4px; height: 4px; background: #000; }
.code-l { grid-area: 7 / 3 / 8 / 6; font-size: 18px; line-height: 27px; padding-left: 33px; }
.code, .year, .rep { border: 1px solid #000; margin: -1px 0 0 -1px; }
.code { grid-area: 7 / 6 / 8 / 9; }
.year-l { grid-area: 7 / 12 / 8 / 14; font-size: 18px; line-height: 27px; }
.year { grid-area: 7 / 14 / 8 / 17; }
.part { grid-area: 9 / 2 / 10 / 12; font: bold 19px/28px var(--serif); padding-left: 3px; }
.info { grid-area: 11 / 2 / 17 / 18; width: 100%; height: 136px; table-layout: fixed; border-collapse: collapse; font-size: 17px; line-height: 18px; border: 1px solid #000; margin: -1px 0 0 -1px; }
.i1 { width: 146px; }
.i2 { width: 84px; }
.i3 { width: 168px; }
.i4 { width: 159px; }
.info th { font-weight: normal; text-align: left; background: #ffffe1; padding: 0 0 0 3px; }
.info th, .info td { border: solid #000; border-width: 0 1px; border-bottom: 1px dotted #000; height: 22px; }
.info td { padding: 0; }
.info .nb { border-bottom: 0; }
.info .half { border-right: 1px dotted #000; }
.info .rest { border-left: 1px dotted #000; }
.info tr:last-child > * { border-bottom: 1px solid #000; height: 25px; }
.info .it { font-style: italic; font-size: 19px; }
.note { font: italic 13px/21px var(--serif); color: #000090; }
.n1 { grid-area: 17 / 2 / 18 / 18; padding-left: 4px; }
.n2 { grid-area: 18 / 2 / 19 / 18; padding-left: 9px; }
.boxes { grid-area: 19 / 2 / 27 / 18; display: flex; align-items: flex-start; font: 11px/14px var(--ui-narrow); padding-top: 12px; }
.boxes > * { border: 1px solid #000; margin: 0; display: flex; flex-direction: column; height: 140px; padding: 0; }
.boxes fieldset { height: 147px; margin-top: -7px; justify-content: space-between; min-width: 0; }
.boxes legend { padding: 0 11px 0 5px; }
.boxes label { display: flex; align-items: center; gap: 5px; height: 14px; }
.boxes .b1 { width: 147px; padding: 11px 0 12px 18px; }
.boxes .b1 legend { margin-left: -11px; }
.boxes .b2 { width: 156px; margin-left: 21px; padding: 12px 0 11px 11px; }
.boxes .b2 legend { margin-left: -4px; }
.b3 { width: 208px; justify-content: space-between; }
.boxes .b3 { margin-left: 14px; padding: 12px 0 6px 11px; }
.boxes .b4 { width: 190px; margin-left: 11px; justify-content: space-between; padding: 34px 0 25px 12px; }
.boxes input:checked { background: radial-gradient(circle, #000 0 3px, #fff 4px); }
.date, .head, .sign { grid-column: 13 / 18; text-align: center; font-size: 15px; line-height: 21px; }
.date { grid-row: 27; font-size: 16px; line-height: 26px; }
.head { grid-row: 28; }
.sign { grid-row: 29; }
.rep-l { grid-area: 28 / 2 / 29 / 6; text-align: center; font: bold 16px/22px var(--serif); }
.rep { grid-area: 29 / 2 / 30 / 6; }

.vscroll { width: 15px; display: flex; flex-direction: column; align-items: center; background: #7b9ac6; }
.vscroll .split { height: 7px; width: 13px; background: #fff; border: 1px solid #7b9ac6; border-bottom: 2px solid #7b9ac6; }
.vbtn { margin: 8px 0 5px; }
.vscroll .thumb { flex: 425; width: 15px; border: 1px solid #5d7ba8; background: repeating-linear-gradient(#6d84a5 0 1px, #dde7f3 1px 3px) center / 8px 8px no-repeat, linear-gradient(90deg, #f3f6fa, #c9d5e4 60%, #b3c3d8); }
.vscroll .track { flex: 220; }

.tabbar { display: flex; height: 16px; background: linear-gradient(#a9c5e9, #d6e6fa); border-top: 1px solid #7d9cc4; font-size: 12px; line-height: 16px; color: #15428b; overflow: hidden; }
.tnav { width: 62px; padding: 4px 0 0 5px; }
.tabbar a { padding: 0 11px 0 12px; white-space: nowrap; position: relative; border-bottom: 1px solid #7d9cc4; }
.tabbar a::after { content: ""; position: absolute; right: -2px; top: -1px; height: 18px; width: 1px; background: #6e90c0; transform: rotate(38deg); }
.tabbar .on { background: #fff; font-weight: bold; padding: 0 9px 0 10px; border: 0; }
.tabbar .new { padding: 1px 14px 0 12px; }
.hscroll { margin-left: auto; width: 172px; display: flex; align-items: center; background: #7b9ac6; padding-right: 16px; }
.hscroll .split { width: 6px; height: 12px; background: #fff; border: 1px solid #7d9cc4; }
.hscroll svg { margin: 0 7px; }
.hscroll .thumb { width: 63px; height: 14px; border: 1px solid #5d7ba8; background: repeating-linear-gradient(90deg, #6d84a5 0 1px, #eef3fa 1px 3px) center / 8px 6px no-repeat, linear-gradient(#fff, #cfdbea); }
.hscroll .track { flex: 1; }
.status { display: flex; align-items: center; height: 22px; border-top: 2px solid #5f7fb0; background: linear-gradient(#d8e6f8, #b3cdef 50%, #a5c2ea 50%, #bcd4f2); color: #15306b; padding-right: 2px; }
.status > span { padding: 0 9px 0 7px; line-height: 20px; border-right: 1px solid #8dacd6; }
.views { margin-left: auto; display: flex; border-left: 1px solid #8dacd6; padding-left: 6px; height: 20px; align-items: center; }
.views button { width: 19px; height: 17px; }
.views .on { background: #fbd88e; }
.status > .pct { border: 0; padding: 0 7px 0 9px; }
.status .zoom { margin-right: 7px; }

/* ---- annotations lying over the windows ---- */
.arrow { position: absolute; }
.ar1 { left: 92px; top: 427px; }
.ar2 { left: 463px; top: 729px; }
.frame { position: absolute; left: 179px; top: 1580px; width: 668px; height: 29px; border: 2px solid #f00; }
.callout { position: absolute; font: 16px/19px var(--serif); text-align: center; }
.callout p { position: absolute; }
.k1 { left: 49px; top: 435px; color: #f00; font-size: 15px; }
.k1 p { left: 8px; top: 42px; width: 100px; }
.k2 { left: 549px; top: 628px; color: #f00; }
.k2 p { left: 6px; top: 21px; width: 108px; }
.k3 { left: 428px; top: 1482px; }
.k3 p { left: 10px; top: 19px; width: 130px; }
```
